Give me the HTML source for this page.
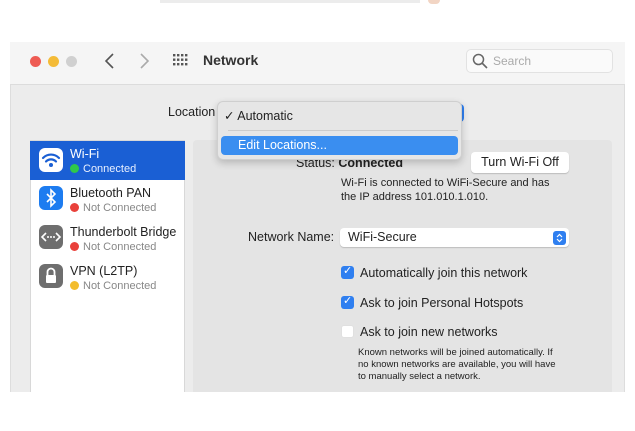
<!DOCTYPE html>
<html><head><meta charset="utf-8"><style>
*{margin:0;padding:0;box-sizing:border-box}
body{width:635px;height:431px;background:#fff;position:relative;overflow:hidden;font-family:"Liberation Sans",Arial,sans-serif;color:#222}
.a{position:absolute}
.win{left:10px;top:42px;width:615px;height:350px;background:#ececec;border-left:1px solid #ddd;border-right:1px solid #ddd}
.title{left:10px;top:42px;width:615px;height:43px;background:#f5f5f5;border-bottom:1px solid #dcdcdc}
.dot{width:11px;height:11px;border-radius:50%;top:56px}
.sb{left:30px;top:140px;width:155px;height:252px;background:#fff;border:1px solid #d8d8d8;border-bottom:none}
.pn{left:193px;top:140px;width:419px;height:252px;background:#e4e4e4;border-radius:4px 4px 0 0}
.ic{width:24px;height:24px;border-radius:6px;left:39px}
.nm{left:70px;font-size:12.5px}
.st{left:70px;font-size:11px;color:#888}
.sd{display:inline-block;width:9px;height:9px;border-radius:50%;margin-right:4px;vertical-align:-1px}
.cb{width:13px;height:13px;border-radius:3px;left:341px;background:#2f7ff0}
.lbl{font-size:12.5px;left:360px}
</style></head><body>
<div class="a" style="left:160px;top:0;width:260px;height:3px;background:#ececec"></div>
<div class="a" style="left:428px;top:0;width:12px;height:4px;background:#f2d5c4;border-radius:0 0 6px 6px"></div>
<div class="a win"></div>
<div class="a title"></div>
<div class="a dot" style="left:30px;background:#ee5b53"></div>
<div class="a dot" style="left:48px;background:#f4bb37"></div>
<div class="a dot" style="left:66px;background:#d0d0d0"></div>
<svg class="a" style="left:103px;top:53px" width="50" height="16"><path d="M10 1L3 8l7 7" fill="none" stroke="#555" stroke-width="1.6"/><path d="M38 1l7 7-7 7" fill="none" stroke="#aaa" stroke-width="1.6"/></svg>
<svg class="a" style="left:173px;top:54px" width="16" height="12" fill="#555"><g><rect x="0" y="0" width="2.4" height="2.4"/><rect x="4" y="0" width="2.4" height="2.4"/><rect x="8" y="0" width="2.4" height="2.4"/><rect x="12" y="0" width="2.4" height="2.4"/><rect x="0" y="4.5" width="2.4" height="2.4"/><rect x="4" y="4.5" width="2.4" height="2.4"/><rect x="8" y="4.5" width="2.4" height="2.4"/><rect x="12" y="4.5" width="2.4" height="2.4"/><rect x="0" y="9" width="2.4" height="2.4"/><rect x="4" y="9" width="2.4" height="2.4"/><rect x="8" y="9" width="2.4" height="2.4"/><rect x="12" y="9" width="2.4" height="2.4"/></g></svg>
<div class="a" style="left:203px;top:52px;font-size:14px;font-weight:bold;color:#333">Network</div>
<div class="a" style="left:466px;top:49px;width:147px;height:24px;background:#fafafa;border:1px solid #e2e2e2;border-radius:5px"></div>
<svg class="a" style="left:472px;top:53px" width="16" height="16"><circle cx="6.5" cy="6.5" r="5" fill="none" stroke="#666" stroke-width="1.5"/><path d="M10 10l5 5" stroke="#666" stroke-width="1.6"/></svg>
<div class="a" style="left:493px;top:54px;font-size:12px;color:#aaa">Search</div>

<div class="a" style="left:168px;top:105px;font-size:12.5px">Location</div>
<div class="a" style="left:440px;top:104px;width:24px;height:18px;background:#fff;border-radius:4px;border-right:3px solid #2f7ff0"></div>

<div class="a sb"></div>
<div class="a pn"></div>
<div class="a" style="left:30px;top:141px;width:155px;height:39px;background:#1a5fd4"></div>
<div class="a ic" style="top:148px;background:#fff"></div>
<svg class="a" style="left:39px;top:148px" width="24" height="24"><g fill="none" stroke="#1a5fd4" stroke-width="2.2" stroke-linecap="round"><path d="M4 10a11 11 0 0 1 16 0"/><path d="M7 13.5a7 7 0 0 1 10 0"/></g><circle cx="12" cy="17" r="2" fill="#1a5fd4"/></svg>
<div class="a nm" style="top:147px;color:#fff">Wi-Fi</div>
<div class="a st" style="top:163px;color:#e8f0ff"><span class="sd" style="background:#2fc84b"></span>Connected</div>

<div class="a ic" style="top:186px;background:#1d7cf0"></div>
<svg class="a" style="left:39px;top:186px" width="24" height="24"><path d="M8 8l8 8-4 4V4l4 4-8 8" fill="none" stroke="#fff" stroke-width="1.6"/></svg>
<div class="a nm" style="top:186px">Bluetooth PAN</div>
<div class="a st" style="top:202px"><span class="sd" style="background:#e9413b"></span>Not Connected</div>

<div class="a ic" style="top:225px;background:#6e6e6e"></div>
<svg class="a" style="left:39px;top:225px" width="24" height="24"><path d="M7 8l-4 4 4 4M17 8l4 4-4 4" fill="none" stroke="#fff" stroke-width="1.6"/><circle cx="9" cy="12" r="1" fill="#fff"/><circle cx="12" cy="12" r="1" fill="#fff"/><circle cx="15" cy="12" r="1" fill="#fff"/></svg>
<div class="a nm" style="top:225px">Thunderbolt Bridge</div>
<div class="a st" style="top:241px"><span class="sd" style="background:#e9413b"></span>Not Connected</div>

<div class="a ic" style="top:264px;background:#6e6e6e"></div>
<svg class="a" style="left:39px;top:264px" width="24" height="24"><path d="M8.5 11V8a3.5 3.5 0 0 1 7 0v3" fill="none" stroke="#fff" stroke-width="1.8"/><rect x="7" y="11" width="10" height="8" rx="1" fill="#fff"/></svg>
<div class="a nm" style="top:264px">VPN (L2TP)</div>
<div class="a st" style="top:280px"><span class="sd" style="background:#f3bd2e"></span>Not Connected</div>

<div class="a" style="left:296px;top:156px;font-size:12.5px">Status: <b>Connected</b></div>
<div class="a" style="left:471px;top:152px;width:98px;height:21px;background:#fff;border-radius:4px;box-shadow:0 1px 1px #bbb;font-size:12.5px;text-align:center;line-height:21px">Turn Wi-Fi Off</div>
<div class="a" style="left:341px;top:177px;font-size:11px;line-height:13.5px">Wi-Fi is connected to WiFi-Secure and has<br>the IP address 101.010.1.010.</div>

<div class="a" style="left:248px;top:230px;font-size:12.5px">Network Name:</div>
<div class="a" style="left:340px;top:228px;width:229px;height:19px;background:#fff;border-radius:4px;box-shadow:0 1px 1px #bbb;font-size:12.5px;line-height:19px;padding-left:8px">WiFi-Secure</div>
<div class="a" style="left:553px;top:231px;width:13px;height:14px;background:#2f7ff0;border-radius:3px"></div>
<svg class="a" style="left:553px;top:231px" width="13" height="14"><path d="M4 6l2.5-2.5L9 6M4 8l2.5 2.5L9 8" fill="none" stroke="#fff" stroke-width="1.2"/></svg>

<div class="a cb" style="top:266px"></div><div class="a" style="left:343px;top:264px;color:#fff;font-size:11px">✓</div>
<div class="a lbl" style="top:266px">Automatically join this network</div>
<div class="a cb" style="top:296px"></div><div class="a" style="left:343px;top:294px;color:#fff;font-size:11px">✓</div>
<div class="a lbl" style="top:296px">Ask to join Personal Hotspots</div>
<div class="a cb" style="top:325px;background:#fff;border:1px solid #e0e0e0"></div>
<div class="a lbl" style="top:325px">Ask to join new networks</div>
<div class="a" style="left:358px;top:347px;font-size:9.5px;line-height:12px">Known networks will be joined automatically. If<br>no known networks are available, you will have<br>to manually select a network.</div>

<div class="a" style="left:217px;top:101px;width:245px;height:59px;background:#e6e6e6;border-radius:6px;border:1px solid #cfcfcf;box-shadow:0 3px 8px rgba(0,0,0,.2)"></div>
<div class="a" style="left:224px;top:108px;font-size:12.5px">✓ Automatic</div>
<div class="a" style="left:228px;top:130px;width:230px;height:1px;background:#ccc"></div>
<div class="a" style="left:221px;top:136px;width:237px;height:19px;background:#3a8ef0;border-radius:4px"></div>
<div class="a" style="left:238px;top:138px;font-size:12.5px;color:#fff">Edit Locations...</div>
</body></html>
